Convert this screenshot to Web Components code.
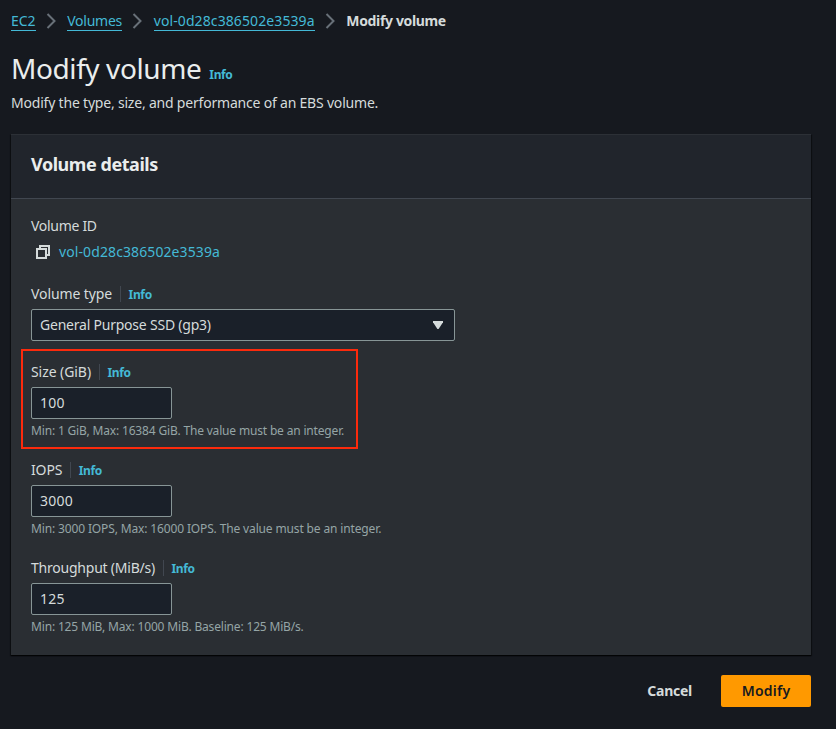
<!DOCTYPE html>
<html lang="en">
<head>
<meta charset="utf-8">
<title>Modify volume</title>
<style>
body{margin:0;height:729px;overflow:hidden;background:#16191f;color:#d5dbdb;font:14px/22px "Noto Sans","Open Sans",sans-serif}
</style>
</head>
<body>
<volume-page></volume-page>
<script>
const define=(name,html,setup)=>{
  const t=document.createElement('template');
  t.innerHTML=html;
  customElements.define(name,class extends HTMLElement{
    connectedCallback(){
      if(this.shadowRoot)return;
      const r=this.attachShadow({mode:'open'});
      r.append(t.content.cloneNode(true));
      if(setup)setup(this,r);
    }
  });
};
const track=(host)=>{host.style.letterSpacing=(host.getAttribute('track')||0)+'px'};

define('ui-text','<style>:host{display:inline-block;white-space:nowrap}</style><slot></slot>',track);

define('info-link','<style>:host{display:inline-block;color:#44b9d6;font-size:12px;font-weight:700;letter-spacing:-.35px;white-space:nowrap}</style>Info');

define('crumb-link',`<style>
:host{display:flex;align-items:center;color:#44b9d6;white-space:nowrap}
span{line-height:18px;border-bottom:1px solid #44b9d6}
svg{margin:0 10.7px 0 10px;width:11px;height:16px;display:block}
</style><span><slot></slot></span><svg viewBox="0 0 11 16" fill="none" stroke="#687078" stroke-width="2"><path d="M1.5 1 8.5 8l-7 7"/></svg>`,track);

define('page-header',`<style>
:host{display:block}
.h{display:flex;align-items:baseline;gap:8px;height:36px}
h1{margin:0;font-weight:400;font-size:28px;line-height:36px;letter-spacing:-.41px;color:#eaeded;white-space:nowrap}
p{margin:6px 0 0}
</style><div class="h"><h1><slot></slot></h1><info-link></info-link></div><p><slot name="description"></slot></p>`);

define('detail-card',`<style>
:host{display:block;box-sizing:border-box;width:800px;background:#2a2e33;box-shadow:0 1px 1px rgba(0,0,0,.6),1px 1px 1px rgba(0,0,0,.35),-1px 1px 1px rgba(0,0,0,.35)}
header{box-sizing:border-box;height:65px;padding:18px 20px;background:#21252c;border-top:1px solid #2c3036;border-bottom:1px solid #414750}
h2{margin:0;font-size:18px;line-height:22px;letter-spacing:-.45px;color:#eaeded}
.body{padding:16px 20px 20px;display:flex;flex-direction:column;gap:20px}
</style><header><h2><slot name="title"></slot></h2></header><div class="body"><slot></slot></div>`);

define('volume-id',`<style>
:host{display:flex;flex-direction:column;gap:4px}
div{display:flex;align-items:center;height:22px;padding-left:4px}
svg{width:16px;height:16px;margin-right:8px}
a{color:#44b9d6;letter-spacing:.1px}
</style><ui-text track="-.3">Volume ID</ui-text><div><svg viewBox="0 0 16 16" fill="none" stroke="#d5dbdb" stroke-width="2"><path d="M2 5h9v9H2zM5 5V2h9v9h-3"/></svg><a><slot></slot></a></div>`);

define('form-field',`<style>
:host{display:block;position:relative}
.label{display:flex;align-items:center;height:22px;margin-bottom:4px}
.label info-link{padding-top:2px}
i{width:1px;height:16px;margin:0 7.5px 0 8px;background:#414750}
small{display:block;font-size:12px;line-height:16px;margin-top:4px;color:#95a5a6;white-space:nowrap}
small[hidden]{display:none}
:host([highlight])::after{content:"";position:absolute;box-sizing:border-box;left:-10px;top:-12px;width:337px;height:100px;border:2px solid #fc2a0c}
</style><div class="label"><span></span><i></i><info-link></info-link></div><slot></slot><small></small>`,(h,r)=>{
  const s=r.querySelector('span'),m=r.querySelector('small');
  s.textContent=h.getAttribute('label');
  s.style.letterSpacing=(h.getAttribute('track')||0)+'px';
  m.textContent=h.getAttribute('hint')||'';
  m.hidden=!h.hasAttribute('hint');
  m.style.letterSpacing=(h.getAttribute('hint-track')||0)+'px';
});

define('text-box',`<style>
:host{display:flex;align-items:center;box-sizing:border-box;width:141px;height:32px;padding:0 8px;border:1px solid #879596;border-radius:2px;background:#1a2029;letter-spacing:.25px}
</style><slot></slot>`);

define('select-box',`<style>
:host{display:flex;align-items:center;justify-content:space-between;box-sizing:border-box;width:424px;height:32px;padding:0 11px 0 8px;border:1px solid #879596;border-radius:2px;background:#1a2029;letter-spacing:-.22px}
svg{width:10px;height:8px}
</style><slot></slot><svg viewBox="0 0 10 8"><path d="M0 0h10v1.2L5.6 8H4.4L0 1.2z" fill="#d5dbdb"/></svg>`);

define('action-button',`<style>
:host{display:flex;align-items:center;justify-content:center;box-sizing:border-box;height:32px;padding:0 20px;font-weight:700;border-radius:2px;white-space:nowrap;letter-spacing:-.25px}
:host([primary]){width:90px;padding:0;background:#f90;color:#16191f;font-weight:600;letter-spacing:.25px}
</style><slot></slot>`);

define('volume-page',`<style>
:host{display:block;padding:10px 0 0 11px}
nav{display:flex;height:22px}
page-header{margin-top:18px}
detail-card{margin-top:20px}
footer{display:flex;justify-content:flex-end;gap:9px;width:800px;margin-top:20px}
b{color:#d5dbdb}
</style>
<nav><crumb-link track="-.05">EC2</crumb-link><crumb-link track="-.25">Volumes</crumb-link><crumb-link track=".1">vol-0d28c386502e3539a</crumb-link><ui-text track="-.35"><b>Modify volume</b></ui-text></nav>
<page-header>Modify volume<ui-text slot="description" track="-.2">Modify the type, size, and performance of an EBS volume.</ui-text></page-header>
<detail-card><span slot="title">Volume details</span>
<volume-id>vol-0d28c386502e3539a</volume-id>
<form-field label="Volume type" track="-.1"><select-box>General Purpose SSD (gp3)</select-box></form-field>
<form-field highlight label="Size (GiB)" track="-.07" hint="Min: 1 GiB, Max: 16384 GiB. The value must be an integer." hint-track="-.17"><text-box>100</text-box></form-field>
<form-field label="IOPS" track="-.15" hint="Min: 3000 IOPS, Max: 16000 IOPS. The value must be an integer." hint-track="-.14"><text-box>3000</text-box></form-field>
<form-field label="Throughput (MiB/s)" track="-.22" hint="Min: 125 MiB, Max: 1000 MiB. Baseline: 125 MiB/s." hint-track="-.17"><text-box>125</text-box></form-field>
</detail-card>
<footer><action-button>Cancel</action-button><action-button primary>Modify</action-button></footer>`);
</script>
</body>
</html>
